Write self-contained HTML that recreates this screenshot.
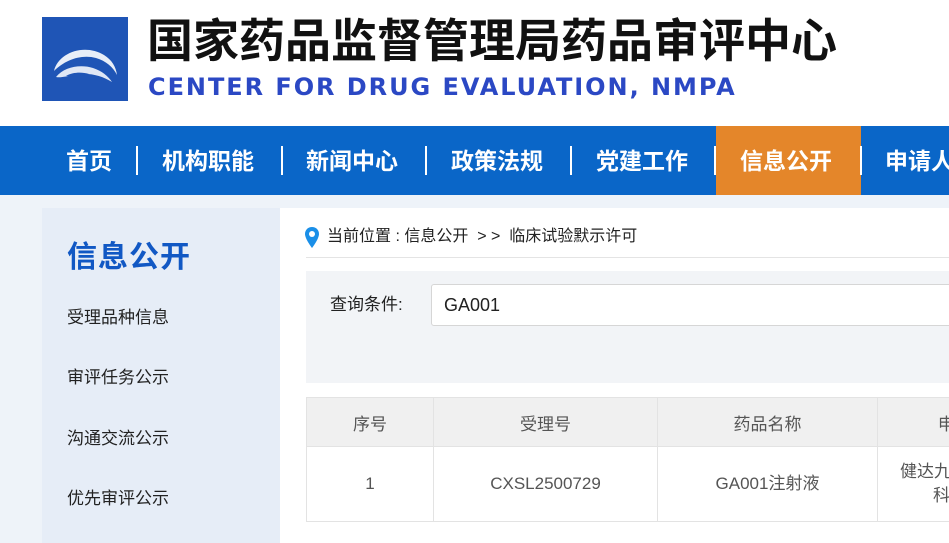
<!DOCTYPE html>
<html><head><meta charset="utf-8"><style>
*{margin:0;padding:0;box-sizing:border-box}
body{width:949px;height:543px;overflow:hidden;background:#eef3f9;font-family:"Liberation Sans","Noto Sans CJK SC",sans-serif;position:relative}
.wrap{position:absolute;left:0;top:0;width:949px;height:543px;overflow:hidden}
.hd{position:absolute;left:0;top:0;width:949px;height:126px;background:#fff}
.logo{position:absolute;left:42px;top:17px;width:86px;height:84px;background:#1f55b6}
.t1{position:absolute;left:147px;top:8px;font-size:46px;font-weight:bold;color:#111;white-space:nowrap;letter-spacing:0;font-family:"Noto Sans CJK SC",sans-serif;line-height:60px;width:700px}
.t2{position:absolute;left:148px;top:72px;font-size:24px;font-weight:bold;color:#2b48c4;white-space:nowrap;letter-spacing:1.95px;font-family:"DejaVu Sans",sans-serif;line-height:30px}
.nav{position:absolute;left:0;top:126px;width:949px;height:69px;background:#0a66c8}
.nav span{position:absolute;top:0;height:69px;line-height:67px;color:#fff;font-size:23px;font-weight:bold;white-space:nowrap;font-family:"Noto Sans CJK SC",sans-serif}
.sep{position:absolute;top:20px;width:2px;height:29px;background:#fff}
.on{position:absolute;left:716px;top:0;width:145px;height:69px;background:#e4862a}
.side{position:absolute;left:42px;top:208px;width:238px;height:335px;background:#e6edf7}
.side h2{position:absolute;left:25px;top:24px;font-size:30px;color:#1158c4;font-weight:bold;font-family:"Noto Sans CJK SC",sans-serif;line-height:44px;letter-spacing:1px}
.side p{position:absolute;left:25px;font-size:17px;color:#222;line-height:22px}
.main{position:absolute;left:280px;top:208px;width:669px;height:335px;background:#fff}
.bc{position:absolute;left:327px;top:226px;font-size:16px;color:#222;line-height:22px;white-space:nowrap}
.line{position:absolute;left:306px;top:257px;width:643px;height:1px;background:#e4e4e4}
.q{position:absolute;left:306px;top:271px;width:643px;height:112px;background:#f2f4f7}
.inp{position:absolute;left:431px;top:284px;width:530px;height:42px;background:#fff;border:1px solid #d6d6d6;border-radius:3px;font-size:18px;line-height:40px;padding-left:12px;color:#222}
table{position:absolute;left:306px;top:397px;width:691px;border-collapse:collapse;font-size:17px;color:#555;table-layout:fixed}
td{border:1px solid #e3e3e3;text-align:center;overflow:hidden;white-space:nowrap;vertical-align:middle}
tr.h td{background:#f0f0f0;height:49px}
tr.b td{height:75px;background:#fff;line-height:24px}
</style></head><body><div class="wrap">
<div class="hd">
<div class="logo"><svg width="86" height="84" viewBox="0 0 86 84"><path d="M12 54c4-18 30-28 50-16 8 5 12 12 13 20-4-8-11-14-21-17-15-4-31 2-42 13z" fill="#e8eef8"/><path d="M14 60c8-10 24-13 37-9 9 3 15 8 19 14-11-7-25-10-38-7-7 1-13 3-18 2z" fill="#dfe7f5"/><path d="M24 59c7-4 16-4 23-2-7 2-16 3-23 2z" fill="#1f55b6"/></svg></div>
<div class="t1">国家药品监督管理局药品审评中心</div>
<div class="t2">CENTER FOR DRUG EVALUATION, NMPA</div>
</div>
<div class="nav">
<div class="on"></div>
<span style="left:66px">首页</span><div class="sep" style="left:136px"></div>
<span style="left:162px">机构职能</span><div class="sep" style="left:281px"></div>
<span style="left:306px">新闻中心</span><div class="sep" style="left:425px"></div>
<span style="left:451px">政策法规</span><div class="sep" style="left:570px"></div>
<span style="left:596px">党建工作</span><div class="sep" style="left:714px"></div>
<span style="left:740px">信息公开</span><div class="sep" style="left:860px"></div>
<span style="left:885px">申请人之窗</span>
</div>
<div class="side">
<h2>信息公开</h2>
<p style="top:99px">受理品种信息</p>
<p style="top:159px">审评任务公示</p>
<p style="top:220px">沟通交流公示</p>
<p style="top:280px">优先审评公示</p>
</div>
<div class="main"></div>
<svg style="position:absolute;left:305px;top:227px" width="14" height="21" viewBox="0 0 14 21"><path d="M7 0C3 0 0 3 0 7c0 5 7 14 7 14s7-9 7-14c0-4-3-7-7-7z" fill="#1a8fe8"/><circle cx="7" cy="7" r="3" fill="#fff"/></svg>
<div class="bc">当前位置 : 信息公开 &nbsp;&gt; &gt;&nbsp; 临床试验默示许可</div>
<div class="line"></div>
<div class="q"><span style="position:absolute;left:24px;top:22px;font-size:17px;color:#222;line-height:24px">查询条件:</span></div>
<div class="inp">GA001</div>
<table>
<colgroup><col style="width:127px"><col style="width:224px"><col style="width:220px"><col style="width:120px"></colgroup>
<tr class="h"><td>序号</td><td>受理号</td><td>药品名称</td><td style="text-align:left;padding-left:60px">申请人</td></tr>
<tr class="b"><td>1</td><td>CXSL2500729</td><td>GA001注射液</td><td style="text-align:left;padding-left:22px">健达九州<br>&nbsp;&nbsp;&nbsp;&nbsp;&nbsp;&nbsp;&nbsp;科技</td></tr>
</table>
</div></body></html>
